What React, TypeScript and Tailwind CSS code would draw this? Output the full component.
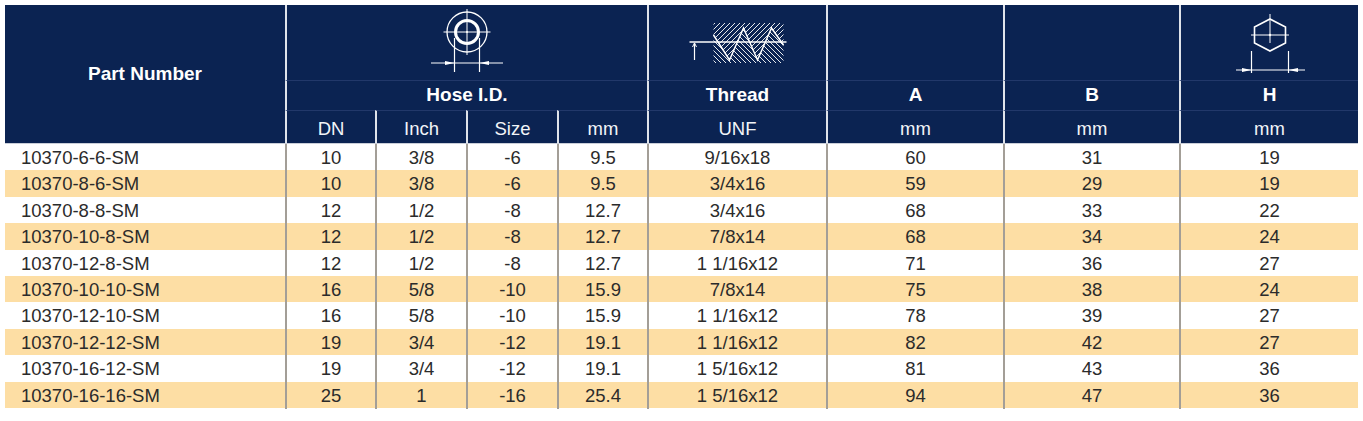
import React from 'react'

const cols = 'grid grid-cols-[280px_90px_91px_91px_90px_179px_177px_176px_179px]'

const rows = [
  ['10370-6-6-SM', '10', '3/8', '-6', '9.5', '9/16x18', '60', '31', '19'],
  ['10370-8-6-SM', '10', '3/8', '-6', '9.5', '3/4x16', '59', '29', '19'],
  ['10370-8-8-SM', '12', '1/2', '-8', '12.7', '3/4x16', '68', '33', '22'],
  ['10370-10-8-SM', '12', '1/2', '-8', '12.7', '7/8x14', '68', '34', '24'],
  ['10370-12-8-SM', '12', '1/2', '-8', '12.7', '1 1/16x12', '71', '36', '27'],
  ['10370-10-10-SM', '16', '5/8', '-10', '15.9', '7/8x14', '75', '38', '24'],
  ['10370-12-10-SM', '16', '5/8', '-10', '15.9', '1 1/16x12', '78', '39', '27'],
  ['10370-12-12-SM', '19', '3/4', '-12', '19.1', '1 1/16x12', '82', '42', '27'],
  ['10370-16-12-SM', '19', '3/4', '-12', '19.1', '1 5/16x12', '81', '43', '36'],
  ['10370-16-16-SM', '25', '1', '-16', '25.4', '1 5/16x12', '94', '47', '36'],
]

function HoseIcon() {
  return (
    <svg width="80" height="70" viewBox="0 0 80 70" fill="none" stroke="white">
      <circle cx="40" cy="27" r="20" strokeWidth="1.3" />
      <circle cx="40" cy="27" r="11.5" strokeWidth="3" />
      <line x1="16.5" y1="27" x2="63.5" y2="27" strokeWidth="1" />
      <line x1="40" y1="4" x2="40" y2="50" strokeWidth="1" />
      <circle cx="40" cy="27" r="1" fill="white" stroke="none" />
      <line x1="27.5" y1="33" x2="27.5" y2="67" strokeWidth="1.2" />
      <line x1="52.5" y1="33" x2="52.5" y2="67" strokeWidth="1.2" />
      <line x1="4" y1="58" x2="76" y2="58" strokeWidth="1.2" />
      <path d="M27.5 58 L18 56 L18 60 Z" fill="white" stroke="none" />
      <path d="M52.5 58 L62 56 L62 60 Z" fill="white" stroke="none" />
    </svg>
  )
}

function ThreadIcon() {
  const zig = '25.5,15 41.5,40 55.5,8 69.5,40 83.5,8 95.5,25'
  return (
    <svg width="100" height="50" viewBox="0 0 100 50" fill="none" stroke="white">
      <defs>
        <pattern id="up" width="5" height="5" patternUnits="userSpaceOnUse">
          <path d="M-1 6 L6 -1" stroke="white" strokeWidth="0.9" />
        </pattern>
        <pattern id="down" width="5" height="5" patternUnits="userSpaceOnUse">
          <path d="M-1 -1 L6 6" stroke="white" strokeWidth="0.9" />
        </pattern>
      </defs>
      <polygon points={`25.5,3 95.5,3 ${zig.split(' ').reverse().join(' ')}`} fill="url(#up)" stroke="none" />
      <polygon points={`${zig} 95.5,43 25.5,43`} fill="url(#down)" stroke="none" />
      <polyline points={zig} strokeWidth="1.5" />
      <line x1="1.5" y1="22" x2="98.5" y2="22" strokeWidth="1.5" />
      <line x1="6.5" y1="23" x2="6.5" y2="40" strokeWidth="1.2" />
      <path d="M4.5 27 L6.5 23 L8.5 27" strokeWidth="1" />
    </svg>
  )
}

function HexIcon() {
  return (
    <svg width="86" height="70" viewBox="0 0 86 70" fill="none" stroke="white">
      <polygon points="43,14 58.5,22 58.5,38 43,46 27.5,38 27.5,22" strokeWidth="1.6" />
      <line x1="24" y1="30" x2="62" y2="30" strokeWidth="1" />
      <line x1="43" y1="9" x2="43" y2="38" strokeWidth="1" />
      <circle cx="43" cy="30" r="1.2" fill="white" stroke="none" />
      <line x1="24.5" y1="46" x2="24.5" y2="68" strokeWidth="1.2" />
      <line x1="61.5" y1="46" x2="61.5" y2="68" strokeWidth="1.2" />
      <line x1="9" y1="65" x2="78" y2="65" strokeWidth="1.2" />
      <path d="M24.5 65 L15 63 L15 67 Z" fill="white" stroke="none" />
      <path d="M61.5 65 L71 63 L71 67 Z" fill="white" stroke="none" />
    </svg>
  )
}

export default function App() {
  const title = 'flex items-center justify-center text-[19px] font-bold text-white'
  const unit = 'flex items-center justify-center pt-1 text-[18.5px] text-[#f2f4f8]'

  return (
    <div className="min-h-[421px] bg-white pl-[5px] pt-[5px] font-['Liberation_Sans',Arial,sans-serif]">
      <div className="w-[1353px]">
        {/* Header */}
        <div className={`${cols} grid-rows-[75px_30px_33px] border-b border-[#c9ced8] bg-[#0b2352]`}>
          <div className={`${title} col-start-1 row-span-3 row-start-1`}>Part Number</div>

          <div className="col-span-4 col-start-2 row-start-1 flex justify-center border-l-2 border-[#dfe3ea]">
            <HoseIcon />
          </div>
          <div className="col-start-6 row-start-1 flex justify-center border-l-2 border-[#dfe3ea] pt-[15px]">
            <ThreadIcon />
          </div>
          <div className="col-start-7 row-start-1 border-l-2 border-[#dfe3ea]" />
          <div className="col-start-8 row-start-1 border-l-2 border-[#dfe3ea]" />
          <div className="col-start-9 row-start-1 flex justify-center border-l-2 border-[#dfe3ea]">
            <HexIcon />
          </div>

          <div className={`${title} col-span-4 col-start-2 row-start-2 border-l-2 border-t border-[#dfe3ea] border-t-[#22386a]`}>Hose I.D.</div>
          <div className={`${title} col-start-6 row-start-2 border-l-2 border-t border-[#dfe3ea] border-t-[#22386a]`}>Thread</div>
          <div className={`${title} col-start-7 row-start-2 border-l-2 border-t border-[#dfe3ea] border-t-[#22386a]`}>A</div>
          <div className={`${title} col-start-8 row-start-2 border-l-2 border-t border-[#dfe3ea] border-t-[#22386a]`}>B</div>
          <div className={`${title} col-start-9 row-start-2 border-l-2 border-t border-[#dfe3ea] border-t-[#22386a]`}>H</div>

          {['DN', 'Inch', 'Size', 'mm', 'UNF', 'mm', 'mm', 'mm'].map((u, i) => (
            <div key={i} className={`${unit} row-start-3 border-l-2 border-t border-[#dfe3ea] border-t-[#22386a]`}>
              {u}
            </div>
          ))}
        </div>

        {/* Body */}
        {rows.map((r, i) => (
          <div key={r[0]} className={`${cols} h-[26.4px] text-[18.5px] text-[#2b2b2b] ${i % 2 ? 'bg-[#fddea4]' : 'bg-white'}`}>
            {r.map((c, j) =>
              j === 0 ? (
                <div key={j} className="flex items-center pl-4">{c}</div>
              ) : (
                <div key={j} className="flex items-center justify-center border-l-2 border-[#a39e97]">{c}</div>
              ),
            )}
          </div>
        ))}
      </div>
    </div>
  )
}
